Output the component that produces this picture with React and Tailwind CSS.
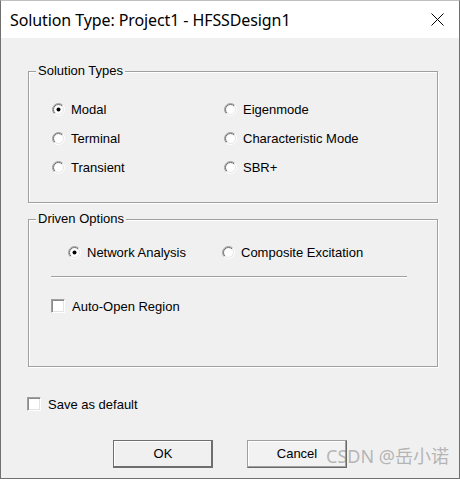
import React from "react"

const ui = { fontFamily: '"Liberation Sans", Arial, sans-serif' }

function Radio({ checked }) {
  return (
    <svg width="13" height="13" viewBox="0 0 13 13" className="shrink-0">
      <circle cx="6.5" cy="6.5" r="5.5" fill="#fff" />
      <path d="M2.25 10.75 A6 6 0 0 1 10.75 2.25" fill="none" stroke="#a0a0a0" strokeWidth="1" />
      <path d="M10.75 2.25 A6 6 0 0 1 2.25 10.75" fill="none" stroke="#ffffff" strokeWidth="1" />
      <path d="M2.96 10.04 A5 5 0 0 1 10.04 2.96" fill="none" stroke="#696969" strokeWidth="1" />
      <path d="M10.04 2.96 A5 5 0 0 1 2.96 10.04" fill="none" stroke="#e3e3e3" strokeWidth="1" />
      {checked && <circle cx="6.5" cy="6.5" r="2" fill="#000" />}
    </svg>
  )
}

function Check() {
  return (
    <div className="w-[14px] h-[14px] shrink-0 bg-white border border-[#a0a0a0] border-r-white border-b-white shadow-[inset_1px_1px_0_#8a8a8a,inset_-1px_-1px_0_#e3e3e3]" />
  )
}

function Option({ label, checked }) {
  return (
    <div className="flex items-center gap-[6px] h-[29px]">
      <Radio checked={checked} />
      <span className="text-[13px] leading-[15px] text-black">{label}</span>
    </div>
  )
}

function GroupBox({ title, className, children }) {
  return (
    <div
      className={`relative w-[410px] border border-[#a0a0a0] shadow-[1px_1px_0_#fff,inset_1px_1px_0_#fff] ${className}`}
    >
      <span className="absolute top-[-9px] left-[7px] px-[2px] bg-[#f0f0f0] text-[13px] leading-[15px] text-black">
        {title}
      </span>
      {children}
    </div>
  )
}

export default function App() {
  return (
    <div
      className="relative w-[460px] h-[479px] bg-[#f0f0f0] border border-[#707070] border-t-[#c0c0c0] flex flex-col overflow-hidden"
      style={ui}
    >
      {/* title bar */}
      <div className="h-[37px] shrink-0 bg-white flex items-center justify-between pl-[9px] pr-[15px]">
        <span
          className="text-[16px] text-black tracking-[-0.1px]"
          style={{ fontFamily: '"Noto Sans", "Open Sans", sans-serif' }}
        >
          Solution Type: Project1 - HFSSDesign1
        </span>
        <svg width="13" height="13" viewBox="0 0 13 13">
          <path d="M0.5 0.5 L12.5 12.5 M12.5 0.5 L0.5 12.5" stroke="#000" strokeWidth="1" fill="none" />
        </svg>
      </div>

      <div className="flex flex-col pl-[27px]">
        <GroupBox title="Solution Types" className="mt-[33px] h-[132px]">
          <div className="grid grid-cols-[172px_1fr] pl-[23px] pt-[23px]">
            <Option label="Modal" checked />
            <Option label="Eigenmode" />
            <Option label="Terminal" />
            <Option label="Characteristic Mode" />
            <Option label="Transient" />
            <Option label="SBR+" />
          </div>
        </GroupBox>

        <GroupBox title="Driven Options" className="mt-[16px] h-[148px]">
          <div className="flex items-center pl-[39px] pt-[18px]">
            <div className="w-[154px]">
              <Option label="Network Analysis" checked />
            </div>
            <Option label="Composite Excitation" />
          </div>
          <div className="ml-[22px] w-[356px] mt-[9px] border-t border-[#a0a0a0] border-b border-b-white" />
          <div className="ml-[22px] mt-[21px] flex items-center gap-[7px] h-[14px]">
            <Check />
            <span className="text-[13px] leading-[15px] text-black">Auto-Open Region</span>
          </div>
        </GroupBox>

        <div className="mt-[30px] flex items-center gap-[7px] h-[14px] ml-[-1px]">
          <Check />
          <span className="text-[13px] leading-[15px] text-black">Save as default</span>
        </div>

        <div className="mt-[29px] flex gap-[34px] pl-[85px]">
          <button className="w-[100px] h-[28px] bg-[#f0f0f0] border border-[#6e6e6e] shadow-[inset_-1px_-1px_0_#6e6e6e,inset_1px_1px_0_#fff] text-[13px] text-black">
            OK
          </button>
          <button className="w-[100px] h-[28px] bg-[#f2f2f2] border border-[#a0a0a0] border-r-[#696969] border-b-[#696969] shadow-[inset_-1px_-1px_0_#a0a0a0,inset_1px_1px_0_#fff] text-[13px] text-black">
            Cancel
          </button>
        </div>
      </div>

      {/* watermark */}
      <span
        className="absolute left-[325px] top-[443px] text-[18px] leading-[24px] text-[rgba(120,120,120,0.5)] whitespace-nowrap"
        style={{ fontFamily: '"Noto Sans", "Noto Sans CJK SC", sans-serif' }}
      >
        CSDN @岳小诺
      </span>
    </div>
  )
}
